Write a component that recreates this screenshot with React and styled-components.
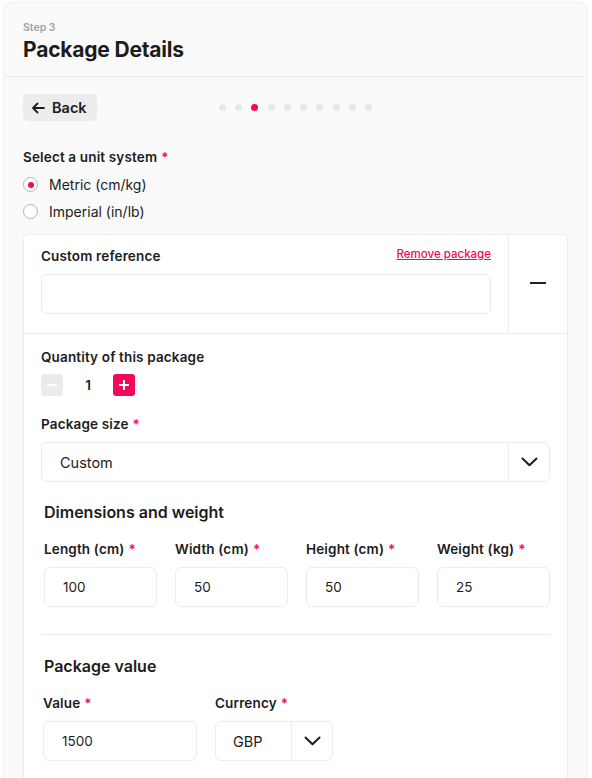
import React from "react";
import styled, { createGlobalStyle } from "styled-components";

const PINK = "#f5075a";
const TEXT = "#1c1c1c";
const BORDER = "#ececec";

const Global = createGlobalStyle`
  html, body { margin: 0; padding: 0; background: #ffffff; }
  body { font-family: Inter, "Noto Sans", sans-serif; color: ${TEXT}; }
  * { box-sizing: border-box; }
`;

const Page = styled.div`
  padding: 3px 6px 0 5px;
  height: 778px;
  overflow: hidden;
`;

const Card = styled.div`
  background: #fafafa;
  border-radius: 8px;
  box-shadow: 0 0 4px rgba(0, 0, 0, 0.12);
  min-height: 820px;
`;

const Header = styled.div`
  padding: 18px 18px 13px;
  border-bottom: 1px solid ${BORDER};
`;

const StepLabel = styled.div`
  font-size: 10.5px;
  line-height: 14px;
  font-weight: 600;
  color: #a3a3a3;
`;

const Title = styled.h1`
  margin: 2px 0 0;
  font-size: 21px;
  line-height: 26px;
  font-weight: 700;
  letter-spacing: -0.2px;
`;

const Body = styled.div`
  padding: 17px 18px 0;
`;

const NavRow = styled.div`
  display: grid;
  grid-template-columns: 1fr auto 1fr;
  align-items: center;
`;

const BackButton = styled.button`
  justify-self: start;
  display: flex;
  align-items: center;
  gap: 7px;
  height: 27px;
  padding: 0 10px 0 8px;
  border: none;
  border-radius: 5px;
  background: #ececec;
  font-family: inherit;
  font-size: 14.5px;
  font-weight: 600;
  color: ${TEXT};
`;

const Dots = styled.div`
  display: flex;
  gap: 9.3px;
`;

const Dot = styled.span`
  width: 7px;
  height: 7px;
  border-radius: 50%;
  background: ${(p) => (p.$active ? PINK : "#e8e8e8")};
`;

const Label = styled.div`
  font-size: 13.5px;
  line-height: 18px;
  font-weight: 600;
  letter-spacing: 0.15px;
  color: ${TEXT};
  margin-top: ${(p) => p.$mt || 0}px;
  white-space: nowrap;
`;

const Req = styled.span`
  color: ${PINK};
  margin-left: 4px;
`;

const RadioGroup = styled.div`
  margin-top: 5px;
  display: flex;
  flex-direction: column;
`;

const RadioRow = styled.label`
  display: flex;
  align-items: center;
  gap: 11px;
  height: 27px;
  font-size: 14px;
  color: ${TEXT};
`;

const RadioCircle = styled.span`
  width: 15px;
  height: 15px;
  border-radius: 50%;
  border: 1.5px solid #b5b5b5;
  background: #fff;
  display: flex;
  align-items: center;
  justify-content: center;
  &::after {
    content: "";
    width: 6px;
    height: 6px;
    border-radius: 50%;
    background: ${(p) => (p.$checked ? PINK : "transparent")};
  }
`;

const PackageCard = styled.div`
  margin-top: 9px;
  background: #fff;
  border: 1px solid ${BORDER};
  border-radius: 5px;
`;

const TopSection = styled.div`
  display: grid;
  grid-template-columns: 1fr 58px;
  border-bottom: 1px solid ${BORDER};
`;

const RefArea = styled.div`
  padding: 12px 17px 19px 17px;
  border-right: 1px solid ${BORDER};
`;

const RefHead = styled.div`
  display: flex;
  justify-content: space-between;
  align-items: center;
`;

const RemoveLink = styled.a`
  font-size: 11.5px;
  font-weight: 500;
  color: ${PINK};
  text-decoration: underline;
  margin-top: -4px;
`;

const TextBox = styled.div`
  margin-top: 9px;
  height: 40px;
  border: 1px solid ${BORDER};
  border-radius: 6px;
  background: #fff;
  display: flex;
  align-items: center;
  padding-left: 18px;
  font-size: 13.5px;
  color: ${TEXT};
  width: ${(p) => p.$w || "auto"};
`;

const Collapse = styled.div`
  display: flex;
  align-items: center;
  justify-content: center;
  padding-bottom: 2px;
  &::before {
    content: "";
    width: 16px;
    height: 2px;
    background: #222;
  }
`;

const Lower = styled.div`
  padding: 14px 17px 40px;
`;

const Stepper = styled.div`
  margin-top: 8px;
  display: flex;
  align-items: center;
  height: 22px;
`;

const StepBtn = styled.span`
  width: 22px;
  height: 22px;
  border-radius: 3px;
  background: ${(p) => (p.$on ? PINK : "#ebebeb")};
  display: flex;
  align-items: center;
  justify-content: center;
`;

const StepValue = styled.span`
  width: 50px;
  text-align: center;
  font-size: 13.5px;
  font-weight: 600;
`;

const Select = styled.div`
  margin-top: 9px;
  height: 40px;
  width: ${(p) => p.$w || "auto"};
  border: 1px solid ${BORDER};
  border-radius: 6px;
  background: #fff;
  display: grid;
  grid-template-columns: 1fr ${(p) => p.$arrow || 41}px;
`;

const SelectValue = styled.div`
  display: flex;
  align-items: center;
  padding-left: ${(p) => p.$pl || 18}px;
  font-size: 14.5px;
`;

const SelectArrow = styled.div`
  border-left: 1px solid ${BORDER};
  display: flex;
  align-items: center;
  justify-content: center;
`;

const SubSection = styled.div`
  padding-left: 3px;
  margin-top: ${(p) => p.$mt || 0}px;
`;

const SubTitle = styled.h2`
  margin: 0;
  font-size: 16px;
  line-height: 20px;
  font-weight: 600;
`;

const DimGrid = styled.div`
  margin-top: 18px;
  display: grid;
  grid-template-columns: repeat(4, 113px);
  column-gap: 18px;
`;

const Field = styled.div``;

const Divider = styled.hr`
  margin: 27px 0 0;
  border: none;
  border-top: 1px solid ${BORDER};
`;

const ValueRow = styled.div`
  margin-top: 18px;
  display: flex;
  gap: 18px;
  margin-left: -1px;
`;

const Chevron = () => (
  <svg width="17" height="10" viewBox="0 0 17 10" fill="none">
    <polyline points="1.5,1.5 8.5,8.2 15.5,1.5" stroke="#1c1c1c" strokeWidth="2" strokeLinecap="round" strokeLinejoin="round" />
  </svg>
);

const BackArrow = () => (
  <svg width="14" height="12" viewBox="0 0 14 12" fill="none">
    <path d="M13 6H2M6.5 1.5 2 6l4.5 4.5" stroke="#1c1c1c" strokeWidth="1.8" strokeLinecap="round" strokeLinejoin="round" />
  </svg>
);

const MinusGlyph = () => (
  <svg width="12" height="12" viewBox="0 0 12 12"><path d="M1 6h10" stroke="#fff" strokeWidth="2" /></svg>
);
const PlusGlyph = () => (
  <svg width="12" height="12" viewBox="0 0 12 12"><path d="M1 6h10M6 1v10" stroke="#fff" strokeWidth="2" /></svg>
);

const dims = [
  { label: "Length (cm)", value: "100" },
  { label: "Width (cm)", value: "50" },
  { label: "Height (cm)", value: "50" },
  { label: "Weight (kg)", value: "25" },
];

export default function App() {
  return (
    <>
      <Global />
      <Page>
        <Card>
          <Header>
            <StepLabel>Step 3</StepLabel>
            <Title>Package Details</Title>
          </Header>
          <Body>
            <NavRow>
              <BackButton>
                <BackArrow />
                Back
              </BackButton>
              <Dots>
                {Array.from({ length: 10 }).map((_, i) => (
                  <Dot key={i} $active={i === 2} />
                ))}
              </Dots>
              <span />
            </NavRow>

            <Label $mt={27}>
              Select a unit system<Req>*</Req>
            </Label>
            <RadioGroup>
              <RadioRow>
                <RadioCircle $checked />
                Metric (cm/kg)
              </RadioRow>
              <RadioRow>
                <RadioCircle />
                Imperial (in/lb)
              </RadioRow>
            </RadioGroup>

            <PackageCard>
              <TopSection>
                <RefArea>
                  <RefHead>
                    <Label>Custom reference</Label>
                    <RemoveLink>Remove package</RemoveLink>
                  </RefHead>
                  <TextBox />
                </RefArea>
                <Collapse />
              </TopSection>
              <Lower>
                <Label>Quantity of this package</Label>
                <Stepper>
                  <StepBtn>
                    <MinusGlyph />
                  </StepBtn>
                  <StepValue>1</StepValue>
                  <StepBtn $on>
                    <PlusGlyph />
                  </StepBtn>
                </Stepper>

                <Label $mt={19}>
                  Package size<Req>*</Req>
                </Label>
                <Select>
                  <SelectValue>Custom</SelectValue>
                  <SelectArrow>
                    <Chevron />
                  </SelectArrow>
                </Select>

                <SubSection $mt={20}>
                  <SubTitle>Dimensions and weight</SubTitle>
                  <DimGrid>
                    {dims.map((d) => (
                      <Field key={d.label}>
                        <Label>
                          {d.label}
                          <Req>*</Req>
                        </Label>
                        <TextBox>{d.value}</TextBox>
                      </Field>
                    ))}
                  </DimGrid>
                </SubSection>

                <Divider />

                <SubSection $mt={21}>
                  <SubTitle>Package value</SubTitle>
                  <ValueRow>
                    <Field>
                      <Label>
                        Value<Req>*</Req>
                      </Label>
                      <TextBox $w="154px">1500</TextBox>
                    </Field>
                    <Field>
                      <Label>
                        Currency<Req>*</Req>
                      </Label>
                      <Select $w="118px" $arrow={41}>
                        <SelectValue $pl={17}>GBP</SelectValue>
                        <SelectArrow>
                          <Chevron />
                        </SelectArrow>
                      </Select>
                    </Field>
                  </ValueRow>
                </SubSection>
              </Lower>
            </PackageCard>
          </Body>
        </Card>
      </Page>
    </>
  );
}
